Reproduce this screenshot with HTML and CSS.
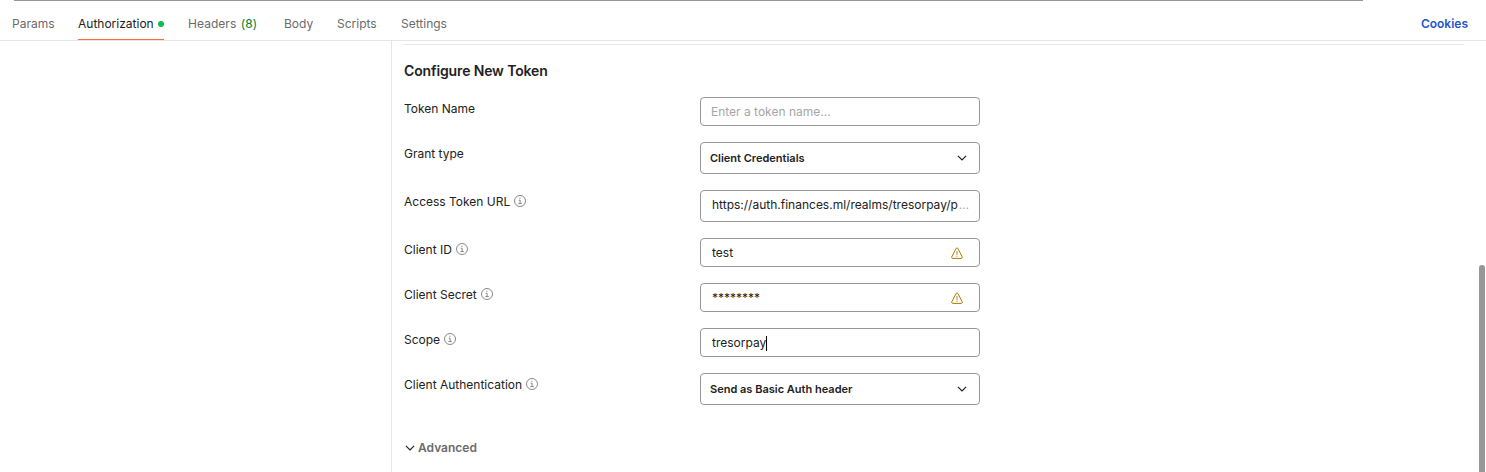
FILE: index.html
```
<!DOCTYPE html>
<html lang="en">
<head>
<meta charset="utf-8">
<title>Authorization</title>
<link rel="stylesheet" href="styles.css">
</head>
<body>
<svg class="symbols" width="0" height="0">
  <symbol id="info" viewBox="0 0 12 12"><circle cx="6" cy="6" r="5.5"/><path d="M4.7 5.2H6.1V8.6M4.4 8.6H7.8"/><path d="M5.4 3.3H6.5"/></symbol>
  <symbol id="chevron" viewBox="0 0 10 6"><path d="M.9.8 5 4.9 9.1.8"/></symbol>
  <symbol id="warning" viewBox="0 0 12 12"><path d="M5.3 1.2.8 9.8Q.4 11.3 1.6 11.4H10.4Q11.6 11.3 11.2 9.8L6.7 1.2Q6 .2 5.3 1.2Z"/><path class="mark" d="M6 4V7.9M6 8.7V9.8"/></symbol>
</svg>
<div class="app">
  <div class="url-edge"></div>
  <nav class="tabs">
    <a class="tab params">Params</a>
    <a class="tab active"><span class="auth">Authorization</span><i class="dot"></i></a>
    <a class="tab headers">Headers <span class="count">(8)</span></a>
    <a class="tab body-tab">Body</a>
    <a class="tab scripts">Scripts</a>
    <a class="tab">Settings</a>
    <a class="cookies">Cookies</a>
  </nav>
  <main class="content">
    <aside class="side"></aside>
    <section class="panel">
      <h2 class="title">Configure New Token</h2>
      <div class="row"><div class="label">Token Name</div><div class="field placeholder">Enter a token name...</div></div>
      <div class="row"><div class="label">Grant type</div><div class="field select"><span>Client Credentials</span><svg class="chevron"><use href="#chevron"/></svg></div></div>
      <div class="row"><div class="label">Access Token URL<svg class="info"><use href="#info"/></svg></div><div class="field url"><span>https://auth.finances.ml/realms/tresorpay/p</span><span class="more">...</span></div></div>
      <div class="row"><div class="label">Client ID<svg class="info"><use href="#info"/></svg></div><div class="field"><span>test</span><svg class="warning"><use href="#warning"/></svg></div></div>
      <div class="row"><div class="label">Client Secret<svg class="info"><use href="#info"/></svg></div><div class="field"><span class="secret">********</span><svg class="warning"><use href="#warning"/></svg></div></div>
      <div class="row"><div class="label">Scope<svg class="info"><use href="#info"/></svg></div><div class="field"><span>tresorpay</span><i class="caret"></i></div></div>
      <div class="row"><div class="label">Client Authentication<svg class="info"><use href="#info"/></svg></div><div class="field select"><span>Send as Basic Auth header</span><svg class="chevron"><use href="#chevron"/></svg></div></div>
      <div class="advanced"><svg class="chevron"><use href="#chevron"/></svg><span>Advanced</span></div>
    </section>
    <div class="scrollbar"></div>
  </main>
</div>
</body>
</html>
```
FILE: styles.css
```
* { box-sizing: border-box; }
body { margin: 0; background: #fff; color: #212121; font: 12px/24px Inter, sans-serif; }
svg { fill: none; flex: none; }
.symbols { position: absolute; }
.app { height: 472px; overflow: hidden; display: flex; flex-direction: column; }
.url-edge { height: 1px; width: 1349px; margin-left: 14px; background: #979797; flex: none; }
.tabs { height: 40px; flex: none; display: flex; padding: 0 18px 0 12px; border-bottom: 1px solid #e6e6e6; color: #6b6b6b; }
.tab { height: 39px; padding-top: 11px; margin-right: 24px; white-space: nowrap; }
.params { width: 42px; }
.active { width: 86px; display: flex; color: #212121; border-bottom: 1px solid #ff6c37; }
.dot { width: 6px; height: 6px; border-radius: 50%; background: #0cbb52; margin: 9px 0 0 auto; }
.count { color: #007f31; }
.headers { width: 72px; letter-spacing: .05px; }
.count { margin-left: 1px; }
.body-tab { width: 29px; }
.scripts { width: 40px; }
.cookies { margin-left: auto; padding: 11px 0 0; color: #1f55cc; font-weight: 600; }
.content { flex: 1; display: flex; min-height: 0; }
.side { width: 392px; border-right: 1px solid #e6e6e6; flex: none; }
.panel { width: 1060px; margin: 3px 0 0 12px; border-top: 1px solid #e6e6e6; }
.title { margin: 14px 0; font-size: 14px; line-height: 24px; font-weight: 600; letter-spacing: -.13px; }
.row { display: flex; margin-bottom: 16px; }
.label { width: 296px; height: 24px; display: flex; }
.info { width: 12px; height: 12px; margin: 5px 0 0 4px; stroke: #6b6b6b; stroke-width: .8; }
.field { width: 280px; height: 29px; border: 1px solid #979797; border-radius: 4px; display: flex; align-items: center; padding: 1px 16px 0 11px; white-space: nowrap; }
.placeholder { color: #a6a6a6; padding-left: 10px; }
.select { height: 32px; padding: 0 12px 0 9px; font-size: 11px; font-weight: 600; }
.url { height: 32px; padding: 0 10px 2px 11px; }
.more { margin-left: auto; color: #a6a6a6; }
.chevron { width: 10px; height: 6px; stroke: #212121; stroke-width: 1.2; }
.select .chevron { margin-left: auto; }
.warning { width: 12px; height: 12px; margin-left: auto; stroke: #ad7a03; stroke-width: 1; }
.mark { stroke-width: .9; }
.caret { width: 1px; height: 15px; background: #000; }
.advanced { display: flex; align-items: center; margin-top: 31px; color: #6b6b6b; font-weight: 600; }
.advanced .chevron { margin: 0 3px 0 1px; }
.scrollbar { width: 6px; height: 220px; margin: 224px 1px 0 auto; background: #979797; border-radius: 3px; }
```
